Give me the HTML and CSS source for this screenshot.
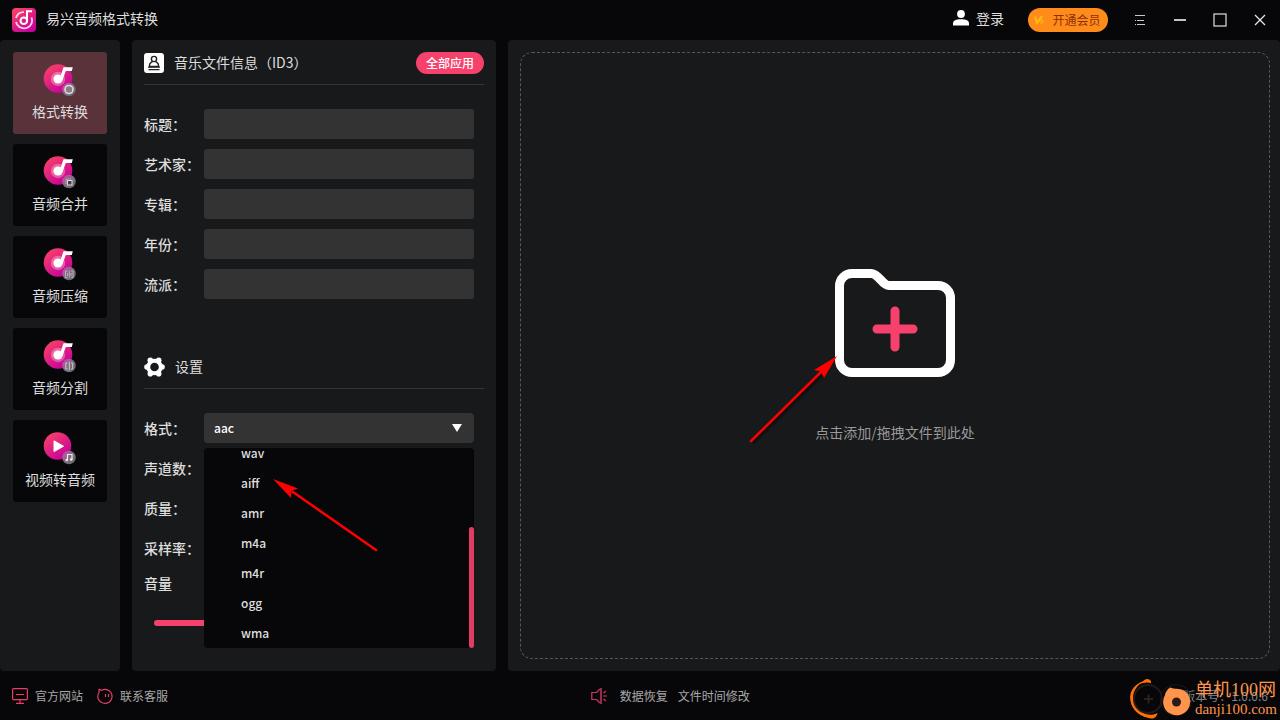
FILE: index.html
```html
<!DOCTYPE html>
<html lang="zh-CN">
<head>
<meta charset="utf-8">
<title>易兴音频格式转换</title>
<link rel="stylesheet" href="styles.css">
</head>
<body>
<svg class="defs" width="0" height="0" aria-hidden="true">
  <defs>
    <linearGradient id="pink" x1="0" y1="0" x2="0.7" y2="1">
      <stop offset="0" stop-color="#ff4860"/><stop offset="1" stop-color="#c6009c"/>
    </linearGradient>
    <linearGradient id="badge" x1="0" y1="0" x2="1" y2="1">
      <stop offset="0" stop-color="#c94fb0"/><stop offset="0.6" stop-color="#77717a"/><stop offset="1" stop-color="#5e5c60"/>
    </linearGradient>
    <symbol id="disc" viewBox="0 0 34 34">
      <circle cx="15" cy="14.500" r="14.300" fill="url(#pink)"/>
      <circle cx="15" cy="15" r="7.200" fill="#fff" opacity=".3"/>
      <circle cx="15" cy="15" r="4.600" fill="#fff"/>
      <path d="M16.500 15 20.500 3.200H29.800L28.800 7H22.800L19.500 16z" fill="#fff"/>
      <circle cx="26" cy="25.500" r="6.800" fill="url(#badge)"/>
    </symbol>
  </defs>
</svg>
<div class="app">
  <header class="titlebar">
    <svg class="logo" viewBox="0 0 24 24" aria-hidden="true">
      <rect width="24" height="24" rx="4" fill="url(#pink)"/>
      <path d="M12 4.200A8.200 8.200 0 0 0 4 10M4 14A8.200 8.200 0 0 0 20.200 12.500L19.500 9.500" fill="none" stroke="#fff" stroke-width="1.800" opacity=".8"/>
      <circle cx="11.800" cy="12.800" r="3.300" fill="none" stroke="#fff" stroke-width="2"/>
      <path d="M15 12.800V3.200H20" fill="none" stroke="#fff" stroke-width="2"/>
    </svg>
    <h1 class="app-name">易兴音频格式转换</h1>
    <button class="login" type="button">
      <svg width="16" height="16" viewBox="0 0 16 16" aria-hidden="true"><circle cx="8" cy="4" r="3.900" fill="#fff"/><path d="M0 15.500v-2C0 10.500 3 9.300 8 9.300s8 1.200 8 4.200v2z" fill="#fff"/></svg>
      登录
    </button>
    <button class="vip" type="button">
      <svg width="12" height="12" viewBox="0 0 12 12" aria-hidden="true"><path d="M2 2.500 4 9 9 2" fill="none" stroke="#ffb814" stroke-width="2.200"/><path d="M7 6.500h3v2H8V10" fill="none" stroke="#ffb814" stroke-width="1"/></svg>
      开通会员
    </button>
    <div class="window-buttons">
      <button type="button" aria-label="菜单"><svg width="16" height="16" viewBox="0 0 16 16"><path d="M3 3.500h10M5 8.500h7M3 8.500h1M3 12.500h1M5 12.500h8" stroke="#c8c8c8"/></svg></button>
      <button type="button" aria-label="最小化"><svg width="16" height="16" viewBox="0 0 16 16"><path d="M2 8h12" stroke="#c4c4c4" stroke-width="2"/></svg></button>
      <button type="button" aria-label="最大化"><svg width="16" height="16" viewBox="0 0 16 16"><rect x="2" y="2" width="12" height="12" fill="none" stroke="#cfcfcf" stroke-width="1.300"/></svg></button>
      <button type="button" aria-label="关闭"><svg width="16" height="16" viewBox="0 0 16 16"><path d="m3 3 10 10M13 3 3 13" stroke="#e8e8e8" stroke-width="1.300"/></svg></button>
    </div>
  </header>

  <main class="workspace">
    <nav class="sidebar">
      <button class="tool active" type="button">
        <svg class="tool-icon" viewBox="0 0 34 34" aria-hidden="true"><use href="#disc"/><circle cx="26" cy="25.500" r="4" fill="#8a7c80" stroke="#e4d8df" stroke-width="1.600"/></svg>格式转换</button>
      <button class="tool" type="button">
        <svg class="tool-icon" viewBox="0 0 34 34" aria-hidden="true"><use href="#disc"/><path d="M23 28v-5h5" fill="none" stroke="#aaa"/><rect x="24.500" y="24.500" width="4.500" height="4.500" fill="#403f43" stroke="#ddd"/></svg>音频合并</button>
      <button class="tool" type="button">
        <svg class="tool-icon" viewBox="0 0 34 34" aria-hidden="true"><use href="#disc"/><path d="M24.500 23H22.500v6.500h2M28 23h2v6.500h-2M26.300 22.500v7M24.500 25v3M28 25v3" fill="none" stroke="#bbb" stroke-width=".9"/></svg>音频压缩</button>
      <button class="tool" type="button">
        <svg class="tool-icon" viewBox="0 0 34 34" aria-hidden="true"><use href="#disc"/><path d="M24.500 23H22.800v6h1.700M28 23h1.700v6H28M26.300 21.500v9" fill="none" stroke="#ccc"/></svg>音频分割</button>
      <button class="tool" type="button">
        <svg class="tool-icon" viewBox="0 0 34 34" aria-hidden="true"><circle cx="14.500" cy="14" r="13.800" fill="url(#pink)"/><path d="M11 8.800v10.800l9.500-5.400z" fill="#fff" stroke="#fff" stroke-linejoin="round"/><circle cx="26" cy="25.500" r="6.800" fill="url(#badge)"/><path d="M24.500 28v-5.500h4.500v5" fill="none" stroke="#eee" stroke-width="1.200"/><circle cx="23.800" cy="28" r="1.300" fill="#eee"/><circle cx="28.200" cy="27.500" r="1.300" fill="#eee"/></svg>视频转音频</button>
    </nav>

    <section class="panel">
      <div class="section-head">
        <svg width="20" height="20" viewBox="0 0 20 20" aria-hidden="true"><rect width="20" height="20" rx="3" fill="#fff"/><circle cx="10" cy="6" r="2.600" fill="none" stroke="#222" stroke-width="1.400"/><path d="M8.500 8.200C8 9.500 5.500 9.700 5.500 12v1.500h9V12c0-2.300-2.500-2.500-3-3.800" fill="none" stroke="#222" stroke-width="1.400"/><path d="M4 14.200h12M4.500 16.600h11" stroke="#222" stroke-width="1.200"/></svg>
        <h2>音乐文件信息（ID3）</h2>
        <button class="apply" type="button">全部应用</button>
      </div>
      <form class="fields">
        <label for="f-title">标题：</label><input id="f-title" type="text">
        <label for="f-artist">艺术家：</label><input id="f-artist" type="text">
        <label for="f-album">专辑：</label><input id="f-album" type="text">
        <label for="f-year">年份：</label><input id="f-year" type="text">
        <label for="f-genre">流派：</label><input id="f-genre" type="text">
      </form>

      <div class="section-head settings-head">
        <svg width="21" height="20" viewBox="0 0 21 20" aria-hidden="true"><circle cx="10.500" cy="10" r="8.300" fill="#fff"/><g fill="#fff"><circle cx="6.300" cy="3.200" r="2.800"/><circle cx="14.700" cy="3.200" r="2.800"/><circle cx="18" cy="10" r="2.800"/><circle cx="14.700" cy="16.800" r="2.800"/><circle cx="6.300" cy="16.800" r="2.800"/><circle cx="3" cy="10" r="2.800"/></g><circle cx="10.500" cy="10" r="4.300" fill="#18191b"/></svg>
        <h2>设置</h2>
      </div>
      <form class="fields">
        <label for="s-format">格式：</label>
        <div class="combo">
          <select id="s-format"><option>aac</option><option>wav</option><option>aiff</option><option>amr</option><option>m4a</option><option>m4r</option><option>ogg</option><option>wma</option></select>
          <svg class="caret" width="10" height="8" viewBox="0 0 10 8" aria-hidden="true"><path d="M0 0h10L5 8z" fill="#fff"/></svg>
          <div class="menu">
            <ul class="options">
              <li>wav</li><li>aiff</li><li>amr</li><li>m4a</li><li>m4r</li><li>ogg</li><li>wma</li>
            </ul>
            <span class="thumb"></span>
            <svg class="arrow-format" width="110" height="80" viewBox="0 0 110 80" aria-hidden="true"><path d="M105 73 22 15" stroke="#f00" stroke-width="2.500" stroke-linecap="round"/><path d="M2 2 27 11.500 20.500 14 20 21z" fill="#f00"/></svg>
          </div>
        </div>
        <span class="label">声道数：</span><span></span>
        <span class="label">质量：</span><span></span>
        <span class="label">采样率：</span><span></span>
      </form>
      <label class="volume-label" for="volume">音量</label>
      <input class="volume" id="volume" type="range" value="100">
    </section>

    <section class="files">
      <button class="dropzone" type="button">
        <span class="folder">
          <svg width="120" height="108" viewBox="0 0 120 108" aria-hidden="true"><path d="M17 4.500H36C44 4.500 47 16.500 54 16.500H103C110 16.500 115.500 22 115.500 29V91C115.500 98 110 103.500 103 103.500H17C10 103.500 4.500 98 4.500 91V17C4.500 10 10 4.500 17 4.500Z" fill="none" stroke="#fff" stroke-width="9"/><path d="M60 42v36M42 60h36" stroke="#f6416c" stroke-width="9" stroke-linecap="round"/></svg>
          <svg class="arrow-folder" width="94" height="94" viewBox="0 0 94 94" aria-hidden="true"><path d="M4 88 74 19" stroke="#000" stroke-opacity=".3" stroke-width="4"/><path d="M2 86 72 17" stroke="#f00" stroke-width="2.500" stroke-linecap="round"/><path d="M88 1 75 23 72 16.500 65 15z" fill="#f00"/></svg>
        </span>
        <span>点击添加/拖拽文件到此处</span>
      </button>
    </section>
  </main>

  <footer class="statusbar">
    <div class="links">
      <a href="#"><svg width="16" height="16" viewBox="0 0 16 16" fill="none" stroke="#e83d66" stroke-width="1.200" aria-hidden="true"><rect x=".6" y=".6" width="14.800" height="11" rx="1"/><path d="M4 6.500h8M8 12v3M4 15.300h8"/></svg>官方网站</a>
      <a href="#"><svg width="16" height="16" viewBox="0 0 16 16" fill="none" stroke="#e83d66" stroke-width="1.200" aria-hidden="true"><path d="M2 1l2.500 1.500M2 1v4M4.500 2.300C8 .5 12 1.500 14 4.500c2 3.500 1 7.500-2 9.700-3.300 2-7.500 1.300-9.700-1.500C.2 10 .5 7 2 4.500"/><path d="M8.500 6v3M11.500 6v3"/></svg>联系客服</a>
    </div>
    <div class="links notices">
      <a href="#"><svg width="17" height="16" viewBox="0 0 17 16" fill="none" stroke="#d23561" stroke-width="1.200" aria-hidden="true"><path d="M5.500 4.500H.8v7h4.700M5.500 4.500 9 .8M5.500 11.500 9 15.200M12 8h4M12.500 5l2.500-2M12.500 11l2.500 2"/><path d="M10 0v16" stroke="#9c2a4b" stroke-width="2"/></svg>数据恢复</a>
      <a href="#">文件时间修改</a>
    </div>
    <span class="version">版本号：1.0.0.6</span>
    <div class="watermark">
      <svg width="64" height="42" viewBox="0 0 64 42" aria-hidden="true">
        <path d="M20 1.500C6 4 0 13 1.300 22 3 34 13 39 22 40.500 26 41 28 38 28.500 35 23 38 16 37 11 33 3 26 2 16 8 9 12 4 17 4 22 3.500Z" fill="#ff6f08"/>
        <path d="M13 5q4-7 9-2v2q-4-1-9 0" fill="#ff6f08"/>
        <circle cx="19" cy="21" r="14" fill="none" stroke="#241a18" stroke-width="2"/><path d="M15 21h9M19.500 16.500v9" stroke="#2c211d" stroke-width="2"/>
        <circle cx="47" cy="22" r="15.500" fill="none" stroke="#201815" stroke-width="1"/>
        <path d="M41 9.500C46 11.500 50 10 55 12.500A13.500 13.500 0 1 1 36 17Q37 12 41 9.500Z" fill="#ff944d"/>
        <circle cx="47.500" cy="24" r="4.500" fill="#291b18"/>
      </svg>
      <div class="watermark-text"><strong>单机100网</strong><span>danji100.com</span></div>
    </div>
  </footer>
</div>
</body>
</html>
```
FILE: styles.css
```css
* { box-sizing: border-box; }
body {
  margin: 0;
  background: #070709;
  color: #dedede;
  font: 14px/20px "Noto Sans CJK SC", sans-serif;
}
button, input, select { font: inherit; color: inherit; border: 0; background: none; padding: 0; margin: 0; }
h1, h2, ul { margin: 0; padding: 0; font-size: 14px; list-style: none; }
svg { display: block; flex: none; }
.defs { position: absolute; }
.app { min-height: 100vh; display: flex; flex-direction: column; }

.titlebar { height: 40px; display: flex; align-items: center; padding: 0 0 0 12px; }
.logo { width: 24px; height: 24px; }
.app-name { margin-left: 10px; font-weight: 400; padding-bottom: 4px; flex: 1; }
.login { display: flex; align-items: center; gap: 7px; padding-bottom: 5px; margin-right: 24px; }
.vip {
  display: flex; align-items: center; justify-content: center; gap: 7px;
  width: 80px; height: 24px; padding-right: 2px; border-radius: 12px;
  background: #ff8c1a; color: #8f2f0a; font-size: 12px;
}
.window-buttons { display: flex; margin-left: 12px; }
.window-buttons button { width: 40px; height: 40px; display: flex; align-items: center; justify-content: center; }

.workspace { flex: 1; display: flex; gap: 12px; }
.sidebar, .panel, .files { background: #18191b; border-radius: 4px; }
.sidebar { width: 120px; padding: 12px 13px; display: flex; flex-direction: column; gap: 10px; }
.tool {
  height: 82px; border-radius: 3px; background: #070709;
  display: flex; flex-direction: column; align-items: center; gap: 3px; padding-top: 12px;
}
.tool.active { background: #5a323a; }
.tool-icon { width: 34px; height: 34px; }

.panel { width: 364px; padding: 12px; }
.section-head { display: flex; align-items: center; height: 33px; padding-bottom: 11px; border-bottom: 1px solid #343436; }
.section-head h2 { font-weight: 400; margin-left: 10px; padding-bottom: 2px; flex: 1; }
.apply { width: 68px; height: 22px; border-radius: 11px; background: #f6416c; color: #fff; font-size: 12px; font-weight: 500; }
.fields { display: grid; grid-template-columns: 60px 1fr; grid-auto-rows: 30px; row-gap: 10px; padding: 24px 10px 0 0; }
.fields label, .label { line-height: 30px; white-space: nowrap; font-weight: 500; }
.fields input { width: 100%; border-radius: 3px; background: #333; padding: 0 10px; }
.settings-head { margin-top: 57px; }
.combo { position: relative; }
.combo select { width: 100%; height: 30px; padding: 0 10px; appearance: none; border-radius: 4px; background: #333; color: #fff; font-size: 12px; font-weight: 500; }
.caret { position: absolute; right: 12px; top: 11px; }
.menu { position: absolute; z-index: 2; top: 35px; left: 0; right: 0; height: 200px; border-radius: 4px; background: #070709; }
.options { height: 100%; overflow: hidden; display: flex; flex-direction: column; justify-content: flex-end; border-radius: 4px; font-size: 12px; font-weight: 500; }
.options li { flex: none; height: 30px; line-height: 30px; padding-left: 37px; }
.thumb { position: absolute; right: 0; bottom: 0; width: 5px; height: 121px; border-radius: 3px; background: #e23c64; }
.arrow-format { position: absolute; left: 67px; top: 29px; }
.volume-label { display: block; margin-top: 10px; font-weight: 500; }
.volume { display: block; appearance: none; width: 310px; max-width: 90%; height: 6px; margin: 27px 0 0 10px; border-radius: 3px; background: linear-gradient(90deg, #f6416c 50%, #333 50%); }
.volume::-webkit-slider-thumb { appearance: none; width: 0; height: 0; }

.files { flex: 1; padding: 12px 10px 12px 12px; display: flex; }
.dropzone {
  flex: 1; border: 1px dashed #55556b; border-radius: 12px;
  display: flex; flex-direction: column; align-items: center; justify-content: center; gap: 45px;
  color: #9a9a9a;
}
.folder { position: relative; }
.arrow-folder { position: absolute; right: 112px; top: 86px; }

.statusbar { position: relative; height: 49px; display: flex; align-items: center; padding: 0 12px; font-size: 12px; color: #a8a8a8; }
.links { display: flex; gap: 14px; flex: 1; }
.links a { display: flex; align-items: center; gap: 7px; color: inherit; text-decoration: none; }
.links.notices { gap: 10px; flex: 1 1 14px; }
.links.notices a { gap: 12px; }
.version { color: #7c8790; }
.watermark { position: absolute; right: 3px; bottom: 0; display: flex; align-items: center; gap: 2px; color: #ff944d; }
.watermark-text { display: flex; flex-direction: column; font-family: "Liberation Serif", "Noto Sans CJK SC", serif; }
.watermark-text strong { font-size: 18px; line-height: 20px; font-weight: 400; }
.watermark-text span { font-size: 15px; line-height: 18px; }
```
